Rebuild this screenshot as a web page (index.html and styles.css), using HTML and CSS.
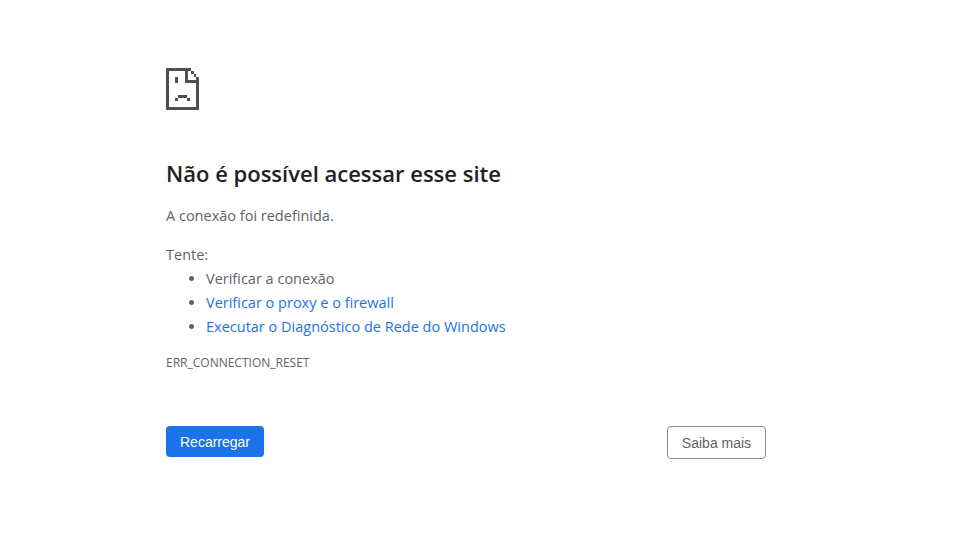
FILE: index.html
```html
<!DOCTYPE html>
<html lang="pt-BR">
<head>
<meta charset="utf-8">
<title>Não é possível acessar esse site</title>
<link rel="stylesheet" href="styles.css">
</head>
<body>
<main class="wrapper">
  <svg class="icon" width="34" height="42" viewBox="0 0 34 42" shape-rendering="crispEdges" aria-hidden="true">
    <path fill="#4f4f4f" d="M0 0H22V3H3V39H30V12H33V42H0ZM19 3H22V12H30V15H19ZM22 0H25V3H28V6H30V9H33V12H30V9H28V6H25V3H22ZM9 9H12V15H9ZM12 27H21V30H12ZM9 30H12V33H9ZM21 30H24V33H21Z"/>
  </svg>
  <h1 class="title">Não é possível acessar esse site</h1>
  <p class="summary">A conexão foi redefinida.</p>
  <p class="try">Tente:</p>
  <ul class="suggestions">
    <li>Verificar a conexão</li>
    <li><a href="#">Verificar o proxy e o firewall</a></li>
    <li><a href="#">Executar o Diagnóstico de Rede do Windows</a></li>
  </ul>
  <div class="code">ERR_CONNECTION_RESET</div>
  <div class="buttons">
    <button class="btn primary" type="button">Recarregar</button>
    <button class="btn secondary" type="button">Saiba mais</button>
  </div>
</main>
</body>
</html>
```
FILE: styles.css
```css
* { box-sizing: border-box; }
html, body { margin: 0; padding: 0; background: #fff; }
body {
  height: 546px;
  overflow: hidden;
  font-family: "Open Sans", "Noto Sans", sans-serif;
  color: #5f6368;
  font-size: 14.5px;
}
.wrapper {
  width: 600px;
  margin-left: 166px;
  padding-top: 68px;
}
.icon { display: block; }
.title {
  margin: 47px 0 0;
  font-size: 22px;
  line-height: 32px;
  font-weight: 600;
  color: #202124;
}
.summary {
  margin: 15px 0 0;
  line-height: 24px;
}
.try {
  margin: 15px 0 0;
  line-height: 24px;
}
.suggestions {
  margin: 0;
  padding-left: 40px;
}
.suggestions li { line-height: 24px; }
.suggestions a { color: #1a73e8; text-decoration: none; }
.code {
  margin-top: 15px;
  font-size: 12px;
  line-height: 18px;
}
.buttons {
  display: flex;
  justify-content: space-between;
  align-items: flex-start;
  margin-top: 54px;
}
.btn {
  font-family: "Liberation Sans", Arial, sans-serif;
  font-size: 14px;
  border-radius: 4px;
  padding: 0;
}
.primary {
  width: 98px;
  height: 31px;
  background: #1a73e8;
  color: #fff;
  border: 0;
}
.secondary {
  width: 99px;
  height: 33px;
  background: #fff;
  color: #5f6368;
  border: 1px solid #8a8a8a;
}
```
